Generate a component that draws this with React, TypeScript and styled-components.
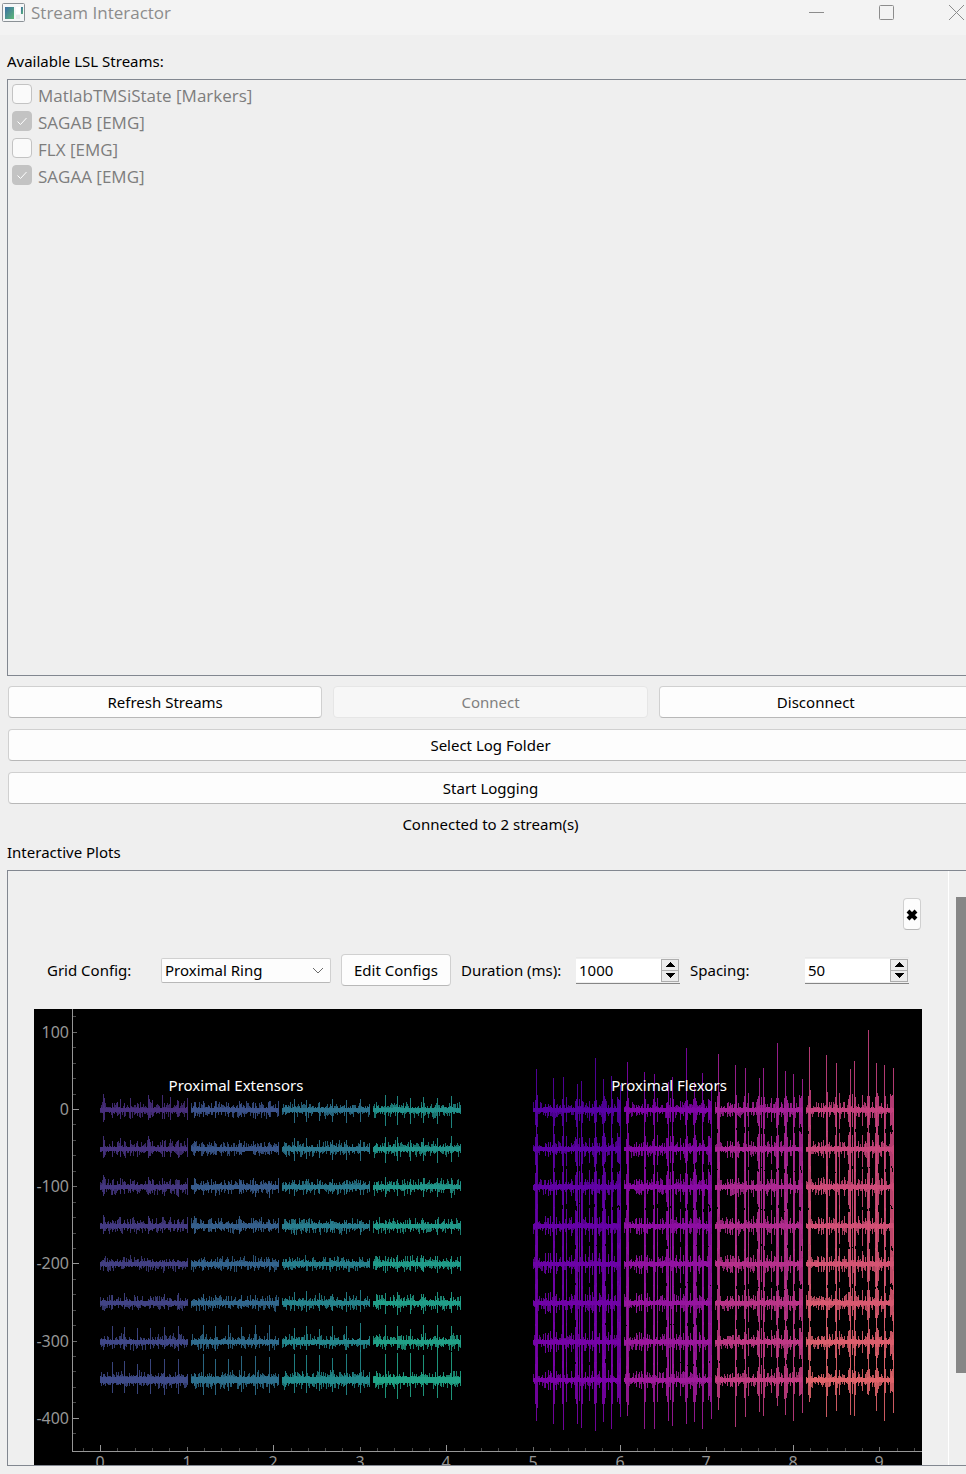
import React, { useId, useMemo, useState } from "react";
import styled, { createGlobalStyle } from "styled-components";

const GlobalStyle = createGlobalStyle`
  *, *::before, *::after { box-sizing: border-box; }
  html, body, #root { height: 100%; }
  body {
    margin: 0;
    background: #efefef;
    color: #000;
    font-family: "Noto Sans", "Open Sans", sans-serif;
    font-size: 15px;
    line-height: 20px;
    overflow: hidden;
  }
  button, input, select { font: inherit; color: inherit; }
`;

const Window = styled.div`
  display: flex;
  flex-direction: column;
  height: 100vh;
  overflow: hidden;
`;

const TitleBar = styled.header`
  display: flex;
  align-items: center;
  flex: none;
  height: 35px;
  margin-right: -25px;
  padding: 0 0 10px 2px;
  background: #f3f3f3;
`;

const Title = styled.h1`
  flex: 1;
  margin: 0 0 0 6px;
  color: #8c8c8c;
  font-family: "Open Sans", sans-serif;
  font-size: 17px;
  font-weight: 400;
  line-height: 24px;
`;

const CaptionButton = styled.button`
  display: flex;
  align-items: center;
  justify-content: center;
  width: 70px;
  height: 25px;
  padding: 0;
  border: 0;
  background: transparent;
  color: #8c8c8c;
`;

const Content = styled.main`
  display: flex;
  flex-direction: column;
  flex: 1;
  gap: 8px;
  min-height: 0;
  width: calc(100% + 15px);
  padding: 16px 7px 8px;
`;

const SectionLabel = styled.h2`
  flex: none;
  margin: 0;
  font-size: 15px;
  font-weight: 400;
  line-height: 20px;
`;

const StreamList = styled.ul`
  flex: 1;
  min-height: 0;
  margin: 0;
  padding: 0 4px 1px;
  border: 1px solid #828790;
  list-style: none;
`;

const StreamRow = styled.li`
  display: flex;
  align-items: center;
  gap: 6px;
  height: 27px;
  color: #7d7d7d;
  font-family: "Open Sans", sans-serif;
  font-size: 17px;

  &:first-child { margin-top: 2px; }
`;

const CheckBox = styled.input`
  appearance: none;
  width: 20px;
  height: 20px;
  margin: 0 0 3px;
  border: 1px solid #c3c3c3;
  border-radius: 4px;
  background: #fafafa;

  &:checked {
    background: #c3c3c3
      url("data:image/svg+xml,%3Csvg xmlns='http://www.w3.org/2000/svg' viewBox='0 0 18 18' fill='none' stroke='white'%3E%3Cpath d='M4.500 9.500l3 3 6-6.500'/%3E%3C/svg%3E")
      center / 18px 18px no-repeat;
  }
`;

const Actions = styled.div`
  display: flex;
  flex-direction: column;
  flex: none;
  gap: 11px;
  padding: 2px 1px;
`;

const ActionRow = styled.div`
  display: flex;
  gap: 11px;
`;

const PushButton = styled.button<{ $grow?: boolean }>`
  flex: ${(p) => (p.$grow ? "1 1 0" : "none")};
  height: 32px;
  padding: 0;
  border: 1px solid #d0d0d0;
  border-bottom-color: #b8b8b8;
  border-radius: 4px;
  background: #fdfdfd;
  text-align: center;

  &:disabled {
    border-color: #e6e6e6;
    background: #f7f7f7;
    color: #808080;
  }
`;

const Status = styled.p`
  flex: none;
  margin: 0;
  text-align: center;
`;

const ScrollFrame = styled.section`
  display: flex;
  flex: 1;
  min-height: 0;
  border: 1px solid #828790;
  overflow: hidden;
`;

const PlotPanel = styled.div`
  flex: 1;
  min-width: 0;
  padding: 27px 26px 0;
`;

const ScrollTrack = styled.div`
  flex: none;
  width: 25px;
  padding: 26px 0 92px 7px;
  border-left: 1px solid #fff;
`;

const ScrollThumb = styled.div`
  height: 100%;
  background: #868686;
`;

const PanelHeader = styled.div`
  display: flex;
  justify-content: flex-end;
  padding-right: 1px;
`;

const CloseButton = styled(PushButton)`
  display: flex;
  align-items: center;
  justify-content: center;
  width: 18px;
`;

const Toolbar = styled.div`
  display: grid;
  grid-template-columns:
    minmax(0, 104fr) minmax(0, 170fr) minmax(0, 110fr) minmax(0, 105fr)
    minmax(0, 104fr) minmax(0, 105fr) minmax(0, 104fr);
  gap: 10px;
  align-items: center;
  padding: 24px 13px 23px;
  white-space: nowrap;
`;

const ComboWrap = styled.div`
  position: relative;
  height: 25px;
`;

const Combo = styled.select`
  appearance: none;
  width: 100%;
  height: 25px;
  padding: 0 24px 0 3px;
  border: 1px solid #d0d0d0;
  border-bottom-color: #b8b8b8;
  border-radius: 2px;
  background: #fdfdfd;
`;

const ComboArrow = styled.svg`
  position: absolute;
  top: 9px;
  right: 7px;
  pointer-events: none;
`;

const SpinBox = styled.div`
  display: flex;
  height: 27px;
  padding: 1px 1px 1px 0;
  border-top: 1px solid #e8e8e8;
  border-bottom: 1px solid #868686;
`;

const SpinInput = styled.input`
  appearance: textfield;
  flex: 1;
  min-width: 0;
  padding: 0 0 0 3px;
  border: 0;
  background: #fff;

  &::-webkit-inner-spin-button { appearance: none; margin: 0; }
`;

const SpinButtons = styled.div`
  display: flex;
  flex-direction: column;
  width: 18px;
  border: 1px solid #adadad;
`;

const SpinButton = styled.button`
  display: flex;
  flex: 1;
  align-items: center;
  justify-content: center;
  padding: 0;
  border: 0;
  background: #ececec;

  & + & { border-top: 1px solid #adadad; }
`;

const Plot = styled.svg`
  display: block;
  width: 100%;
  background: #000;
  font-size: 15px;
`;

type Range = [number, number];

interface Bank {
  start: number;
  from: string;
  to: string;
  spikes: { at: number; up: number[]; down: number[] }[];
  noise: number[];
  seed: number;
}

const X0 = 66;
const X_UNIT = 86.6;
const Y0 = 101;
const ROW_STEP = 38.6;
const ROWS = 8;
const AXIS_X = 38;
const AXIS_Y = 442;
const BANK_WIDTH = 88;

const random = (seed: number) => {
  let s = seed;
  return () => {
    s = (s * 1664525 + 1013904223) % 4294967296;
    return s / 4294967296;
  };
};

const mix = (a: string, b: string, t: number) => {
  const part = (hex: string, i: number) => parseInt(hex.slice(1 + i * 2, 3 + i * 2), 16);
  return `rgb(${[0, 1, 2].map((i) => Math.round(part(a, i) * (1 - t) + part(b, i) * t)).join(",")})`;
};

const fill = (v: number) => Array<number>(ROWS).fill(v);

// Extensor units fire at six shared instants, plus small background bursts.
const extensor = (
  start: number, from: string, to: string, seed: number,
  up: number[], down: number[], burst: number[], noise: number[],
): Bank => ({
  start, from, to, seed, noise,
  spikes: [
    ...[12, 24, 37, 50, 64, 78].map((at, i) => {
      const k = [1, 0.97, 0.86, 0.92, 1, 1.06][i];
      return { at, up: up.map((v) => v * k), down: down.map((v) => v * k) };
    }),
    ...[3, 4, 17, 20, 30, 48, 49, 52, 62, 70, 77, 87].map((at, i) => {
      const k = [1, 0.8, 0.6, 0.8, 0.7, 1, 0.7, 0.6, 0.9, 0.8, 0.7, 0.9][i];
      return { at, up: burst.map((v) => v * k), down: burst.map((v) => v * k * 0.75) };
    }),
  ],
});

const FLEXOR_AT = [3, 20, 30, 44, 48, 62, 70, 78, 87];

// Flexor units fire hard enough for each row to run into the next one.
const flexor = (
  start: number, from: string, to: string, seed: number,
  up: number[], down: number[], body: number[],
): Bank => ({
  start, from, to, seed,
  noise: fill(3),
  spikes: [
    ...FLEXOR_AT.map((at, i) => ({
      at,
      up: body.map((b, r) => (r === 0 ? up[i] : Math.min(up[i] * b, 40))),
      down: body.map((b, r) => (r === ROWS - 1 ? down[i] : Math.min(down[i] * b, 36))),
    })),
    ...FLEXOR_AT.map((at, i) => ({
      at: i % 3 === 1 ? at + 1 : at - 1,
      up: body.map((b) => 17 * b),
      down: body.map((b) => 24 * b),
    })),
    ...[4, 2, 21, 33, 42, 46, 56, 63, 71, 72, 79, 84, 85].map((at, i) => {
      const k = [28, 17, 22, 22, 17, 21, 19, 20, 24, 18, 14, 22, 20][i];
      return { at, up: body.map((b) => k * b * 0.9), down: body.map((b) => k * b) };
    }),
    ...[12, 15, 17, 23, 38, 52, 59, 66, 75].map((at) => ({
      at,
      up: body.map((b) => 9 * b),
      down: body.map((b) => 9 * b),
    })),
  ],
});

const BANKS: Bank[] = [
  extensor(66, "#472e7c", "#3e4b89", 11,
    [8, 8, 6, 6, 4, 9, 15, 20], [8, 8, 8, 4, 4, 6, 8, 14],
    [15, 12, 11, 10, 4, 4, 4, 7], [3, 3, 3, 3, 3, 3, 3, 4]),
  extensor(157, "#3b528b", "#2d708e", 23,
    [8, 6, 6, 6, 5, 8, 17, 24], [8, 6, 9, 6, 5, 6, 8, 14],
    [9, 8, 9, 10, 4, 4, 4, 7], [3, 3, 3, 3, 3, 3, 3, 4]),
  extensor(248, "#2c728e", "#228b8d", 37,
    [11, 10, 8, 6, 4, 11, 16, 26], [12, 11, 8, 8, 4, 8, 8, 13],
    [6, 7, 6, 7, 5, 5, 6, 9], [3, 3, 3, 3, 3, 3, 3, 4]),
  extensor(339, "#21918c", "#20a386", 53,
    [13, 12, 9, 7, 8, 11, 17, 30], [15, 13, 10, 8, 9, 11, 8, 19],
    [5, 6, 5, 6, 8, 9, 7, 9], [3, 3, 3, 3, 3, 3, 3, 4]),
  flexor(499, "#5601a4", "#7a02a8", 71,
    [41, 32, 33, 26, 29, 52, 31, 34, 25], [41, 44, 50, 44, 48, 51, 42, 49, 37],
    [0.6, 0.7, 0.85, 1, 1.1, 1.1, 1.1, 1]),
  flexor(590, "#8004a8", "#9f1a9b", 83,
    [48, 38, 36, 28, 33, 62, 28, 37, 27], [36, 49, 49, 41, 46, 44, 42, 49, 39],
    [0.55, 0.65, 0.85, 0.9, 1, 1, 1, 0.9]),
  flexor(681, "#a52098", "#c23c81", 97,
    [56, 45, 42, 32, 42, 67, 39, 36, 31], [30, 47, 37, 32, 36, 26, 35, 41, 33],
    [0.75, 0.85, 0.95, 0.95, 0.9, 0.8, 0.7, 0.7]),
  flexor(772, "#c5407e", "#e0636a", 109,
    [63, 55, 47, 41, 49, 80, 47, 45, 42], [22, 37, 31, 35, 36, 15, 31, 41, 33],
    [0.8, 0.9, 0.95, 0.95, 0.85, 0.7, 0.65, 0.6]),
];

const tracePaths = (bank: Bank, row: number) => {
  const rnd = random(bank.seed * 977 + row * 131);
  const mid = Math.round(Y0 + row * ROW_STEP);
  let body = "";
  let fringe = "";
  let peaks = "";
  for (let i = 0; i < BANK_WIDTH; i += 1) {
    const x = bank.start + i + 0.5;
    const n = bank.noise[row];
    const core: Range = [n - 1 + Math.round(rnd() * 0.7), n - 1 + Math.round(rnd() * 0.7)];
    const edge: Range = [
      core[0] + Math.round(rnd() ** 3 * 6),
      core[1] + Math.round(rnd() ** 3 * 6),
    ];
    body += `M${x} ${mid - core[0]}V${mid + core[1]}`;
    fringe += `M${x} ${mid - edge[0]}V${mid + edge[1]}`;
    bank.spikes.forEach((s) => {
      if (s.at !== i) return;
      const top = Math.round(s.up[row] * (row === 0 && s.up[0] > 20 ? 1 : 0.85 + rnd() * 0.3));
      const low = Math.round(s.down[row] * (row === 7 && s.down[7] > 20 ? 1 : 0.85 + rnd() * 0.3));
      peaks += `M${x} ${mid - top}V${mid + low}`;
    });
  }
  return { body, fringe, peaks };
};

function Traces() {
  const groups = useMemo(
    () =>
      BANKS.flatMap((bank) =>
        Array.from({ length: ROWS }, (_, row) => ({
          key: `${bank.start}-${row}`,
          color: mix(bank.from, bank.to, row / (ROWS - 1)),
          ...tracePaths(bank, row),
        })),
      ),
    [],
  );
  return (
    <g shapeRendering="crispEdges" fill="none">
      {groups.map((g) => (
        <g key={g.key} stroke={g.color}>
          <path d={g.peaks} strokeOpacity={0.9} />
          <path d={g.fringe} strokeOpacity={0.8} />
          <path d={g.body} />
        </g>
      ))}
    </g>
  );
}

const tickStyle = (kind: number) =>
  [
    { color: "#969696", length: 6 },
    { color: "#6a6a6a", length: 4 },
    { color: "#484848", length: 3 },
  ][kind];

function Axes() {
  const xTicks = Array.from({ length: 49 }, (_, i) => i - 1);
  const yTicks = Array.from({ length: 28 }, (_, i) => 120 - i * 20);
  return (
    <g>
      <g shapeRendering="crispEdges">
        {xTicks.map((i) => {
          const t = tickStyle(i % 10 === 0 ? 0 : i % 5 === 0 ? 1 : 2);
          const x = Math.round(X0 + (i * X_UNIT) / 5) + 0.5;
          return <path key={i} d={`M${x} ${AXIS_Y}v${-t.length}`} stroke={t.color} />;
        })}
        {yTicks.map((v) => {
          const t = tickStyle(v % 200 === 0 ? 0 : v % 100 === 0 ? 1 : 2);
          const y = Math.round(100 - v * 0.772) + 0.5;
          return y < AXIS_Y ? (
            <path key={v} d={`M${AXIS_X + 1} ${y}h${t.length}`} stroke={t.color} />
          ) : null;
        })}
        <path d={`M${AXIS_X + 0.5} 0V${AXIS_Y + 0.5}H888`} stroke="#969696" fill="none" />
      </g>
      <g fill="#969696" fontSize="16">
        {Array.from({ length: 10 }, (_, i) => (
          <text key={i} x={Math.round(X0 + i * X_UNIT)} y={459} textAnchor="middle">{i}</text>
        ))}
        {[100, 0, -100, -200, -300, -400].map((v) => (
          <text key={v} x={35} y={Math.round(106 - v * 0.772)} textAnchor="end">{v}</text>
        ))}
      </g>
    </g>
  );
}

function SpinField({ id, value, onChange, step }: {
  id: string; value: number; onChange: (v: number) => void; step: number;
}) {
  return (
    <SpinBox>
      <SpinInput id={id} type="number" value={value} onChange={(e) => onChange(Number(e.target.value))} />
      <SpinButtons>
        <SpinButton aria-label="Increase" onClick={() => onChange(value + step)}>
          <svg width="10" height="5" shapeRendering="crispEdges"><path d="M0 5L5 0L10 5Z" /></svg>
        </SpinButton>
        <SpinButton aria-label="Decrease" onClick={() => onChange(value - step)}>
          <svg width="10" height="5" shapeRendering="crispEdges"><path d="M0 0L5 5L10 0Z" /></svg>
        </SpinButton>
      </SpinButtons>
    </SpinBox>
  );
}

function AppIcon() {
  return (
    <svg width="23" height="20" viewBox="0 0 23 20" aria-hidden="true">
      <defs>
        <linearGradient id="app-pane" x1="0" y1="0" x2="1" y2="1">
          <stop offset="0" stopColor="#3a6ea5" />
          <stop offset="1" stopColor="#5db877" />
        </linearGradient>
      </defs>
      <rect x="0.5" y="0.5" width="22" height="18" rx="1" fill="#f4f6f7" stroke="#8b9196" />
      <rect x="3" y="4" width="9" height="12" fill="url(#app-pane)" />
      <rect x="14" y="4" width="4" height="7" fill="#fff" />
      <rect x="14" y="12" width="4" height="4" fill="#e6e8ea" />
      <rect x="19" y="4" width="2" height="7" fill="url(#app-pane)" />
    </svg>
  );
}

const STREAMS = [
  { name: "MatlabTMSiState [Markers]", on: false },
  { name: "SAGAB [EMG]", on: true },
  { name: "FLX [EMG]", on: false },
  { name: "SAGAA [EMG]", on: true },
];

export default function App() {
  const id = useId();
  const [duration, setDuration] = useState(1000);
  const [spacing, setSpacing] = useState(50);

  return (
    <Window>
      <GlobalStyle />
      <TitleBar>
        <AppIcon />
        <Title>Stream Interactor</Title>
        <CaptionButton aria-label="Minimize">
          <svg width="15" height="15" stroke="currentColor"><path d="M0 7.500h15" /></svg>
        </CaptionButton>
        <CaptionButton aria-label="Maximize">
          <svg width="15" height="15" fill="none" stroke="currentColor"><rect x="0.5" y="0.5" width="14" height="14" rx="1" /></svg>
        </CaptionButton>
        <CaptionButton aria-label="Close">
          <svg width="15" height="15" stroke="currentColor"><path d="M0 0L15 15M15 0L0 15" /></svg>
        </CaptionButton>
      </TitleBar>

      <Content>
        <SectionLabel>Available LSL Streams:</SectionLabel>
        <StreamList>
          {STREAMS.map((s, i) => (
            <StreamRow key={s.name}>
              <CheckBox type="checkbox" id={`${id}-s${i}`} defaultChecked={s.on} disabled />
              <label htmlFor={`${id}-s${i}`}>{s.name}</label>
            </StreamRow>
          ))}
        </StreamList>

        <Actions>
          <ActionRow>
            <PushButton $grow>Refresh Streams</PushButton>
            <PushButton $grow disabled>Connect</PushButton>
            <PushButton $grow>Disconnect</PushButton>
          </ActionRow>
          <PushButton>Select Log Folder</PushButton>
          <PushButton>Start Logging</PushButton>
        </Actions>

        <Status>Connected to 2 stream(s)</Status>
        <SectionLabel>Interactive Plots</SectionLabel>

        <ScrollFrame>
          <PlotPanel>
            <PanelHeader>
              <CloseButton aria-label="Remove plot">
                <svg width="14" height="14" viewBox="0 0 14 14" aria-hidden="true">
                  <path d="M3 4l8 8M11 4l-8 8" stroke="#000" strokeWidth="4" />
                </svg>
              </CloseButton>
            </PanelHeader>
            <Toolbar>
              <label htmlFor={`${id}-grid`}>Grid Config:</label>
              <ComboWrap>
                <Combo id={`${id}-grid`} defaultValue="Proximal Ring">
                  <option>Proximal Ring</option>
                </Combo>
                <ComboArrow width="12" height="7" fill="none" stroke="#6b6b6b">
                  <path d="M1 1l5 5 5-5" />
                </ComboArrow>
              </ComboWrap>
              <PushButton>Edit Configs</PushButton>
              <label htmlFor={`${id}-duration`}>Duration (ms):</label>
              <SpinField id={`${id}-duration`} value={duration} onChange={setDuration} step={100} />
              <label htmlFor={`${id}-spacing`}>Spacing:</label>
              <SpinField id={`${id}-spacing`} value={spacing} onChange={setSpacing} step={5} />
            </Toolbar>
            <Plot viewBox="0 0 888 480" role="img" aria-label="EMG traces by electrode grid">
              <Traces />
              <Axes />
              <g fill="#fff" textAnchor="middle">
                <text x="202" y="82">Proximal Extensors</text>
                <text x="635" y="82">Proximal Flexors</text>
              </g>
            </Plot>
          </PlotPanel>
          <ScrollTrack>
            <ScrollThumb />
          </ScrollTrack>
        </ScrollFrame>
      </Content>
    </Window>
  );
}
